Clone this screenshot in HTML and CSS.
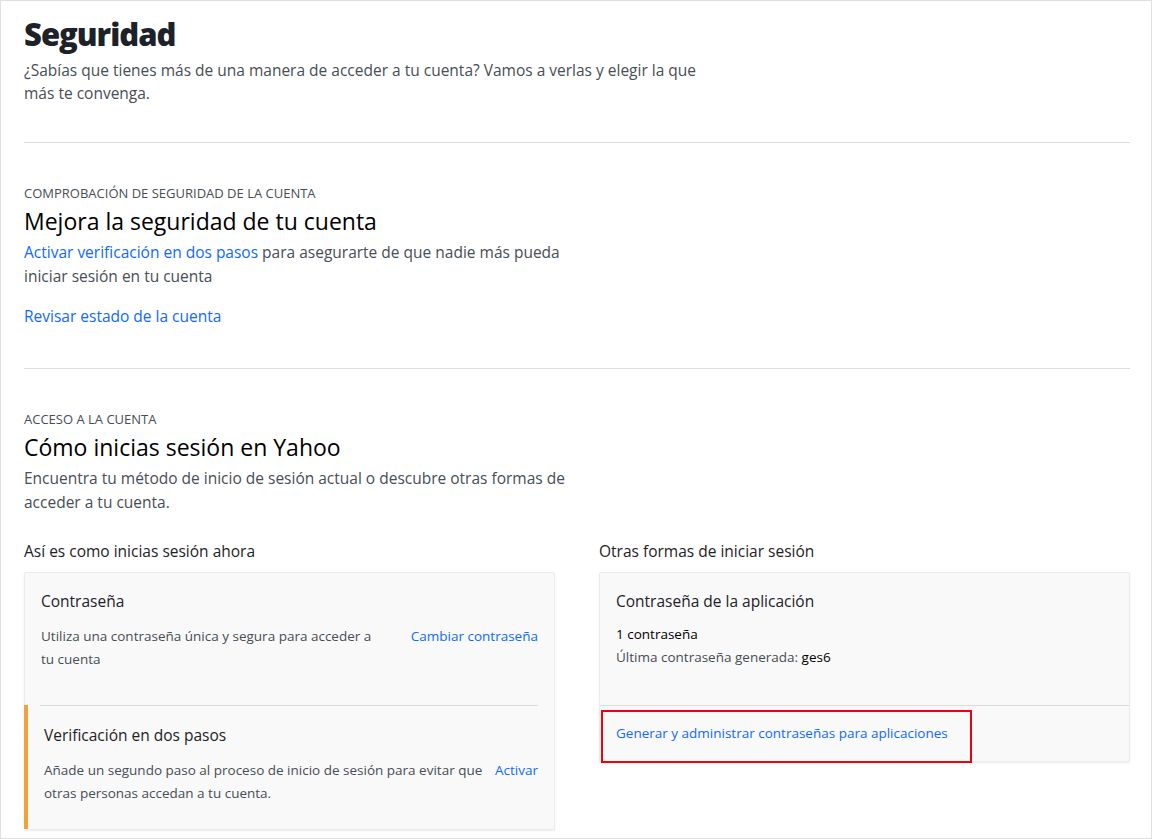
FILE: index.html
```html
<!DOCTYPE html>
<html lang="es">
<head>
  <meta charset="UTF-8">
  <title>Seguridad</title>
  <link rel="stylesheet" href="styles.css">
</head>
<body>
  <div class="page">
    <header class="intro">
      <h1>Seguridad</h1>
      <p>¿Sabías que tienes más de una manera de acceder a tu cuenta? Vamos a verlas y elegir la que más te convenga.</p>
    </header>

    <section class="block">
      <div class="eyebrow">COMPROBACIÓN DE SEGURIDAD DE LA CUENTA</div>
      <h2>Mejora la seguridad de tu cuenta</h2>
      <p class="lead"><a href="#">Activar verificación en dos pasos</a> para asegurarte de que nadie más pueda iniciar sesión en tu cuenta</p>
      <p class="lead review"><a href="#">Revisar estado de la cuenta</a></p>
    </section>

    <section class="block last">
      <div class="eyebrow">ACCESO A LA CUENTA</div>
      <h2>Cómo inicias sesión en Yahoo</h2>
      <p class="lead">Encuentra tu método de inicio de sesión actual o descubre otras formas de acceder a tu cuenta.</p>

      <div class="columns">
        <div class="col">
          <h3>Así es como inicias sesión ahora</h3>
          <div class="card">
            <div class="item">
              <h4>Contraseña</h4>
              <div class="row">
                <p>Utiliza una contraseña única y segura para acceder a tu cuenta</p>
                <a href="#">Cambiar contraseña</a>
              </div>
            </div>
            <div class="item warn">
              <h4>Verificación en dos pasos</h4>
              <div class="row">
                <p>Añade un segundo paso al proceso de inicio de sesión para evitar que otras personas accedan a tu cuenta.</p>
                <a href="#">Activar</a>
              </div>
            </div>
          </div>
        </div>

        <div class="col">
          <h3>Otras formas de iniciar sesión</h3>
          <div class="card">
            <div class="item app">
              <h4>Contraseña de la aplicación</h4>
              <div class="count">1 contraseña</div>
              <div class="meta">Última contraseña generada: <span>ges6</span></div>
            </div>
            <div class="card-foot">
              <a href="#" class="marked">Generar y administrar contraseñas para aplicaciones</a>
            </div>
          </div>
        </div>
      </div>
    </section>
  </div>
</body>
</html>
```

FILE: styles.css
```css
* { margin: 0; padding: 0; box-sizing: border-box; }
html, body {
  height: 100%;
  background: #fff;
  font-family: 'Open Sans', 'Liberation Sans', sans-serif;
  color: #464e56;
}
body { overflow: hidden; }
a { color: #0f69ff; text-decoration: none; }

.page {
  height: 839px;
  border: 1px solid #e0e0e0;
  padding: 0 21px 0 23px;
  overflow: hidden;
}

.intro {
  padding: 13px 0 37px;
  border-bottom: 1px solid #dedede;
}
.intro h1 {
  font-size: 31px;
  font-weight: 800;
  color: #1d2228;
  letter-spacing: -1px;
  line-height: 40px;
}
.intro p {
  font-size: 15.5px;
  line-height: 23px;
  margin-top: 5px;
  max-width: 690px;
}

.block {
  padding: 40px 0 40px;
  border-bottom: 1px solid #dedede;
}
.block.last { border-bottom: none; padding-bottom: 0; }

.eyebrow {
  font-size: 13px;
  line-height: 20px;
  color: #464e56;
}
h2 {
  font-size: 23px;
  font-weight: 400;
  color: #000;
  line-height: 36px;
  margin-bottom: 1px;
}
.lead {
  font-size: 15.5px;
  line-height: 24px;
  max-width: 550px;
}
.lead.review { margin-top: 16px; }

.columns {
  display: grid;
  grid-template-columns: 1fr 1fr;
  gap: 44px;
  margin-top: 26px;
}
.col h3 {
  font-size: 15.5px;
  font-weight: 400;
  color: #1d2228;
  line-height: 22px;
  margin-bottom: 10px;
}

.card {
  background: #f9f9f9;
  border: 1px solid #ececec;
  border-radius: 2px;
  box-shadow: 0 1px 2px rgba(0,0,0,0.08);
}
.item {
  padding: 17px 16px 34px;
}
.item h4 {
  font-size: 15.5px;
  font-weight: 400;
  color: #1d2228;
  line-height: 22px;
}
.row {
  display: flex;
  justify-content: space-between;
  gap: 20px;
  margin-top: 13px;
  font-size: 13.5px;
  line-height: 23px;
}
.row p { max-width: 340px; }
.row a { white-space: nowrap; }

.item.warn {
  position: relative;
  margin-left: -1px;
  border-left: 4px solid #f0a33a;
  padding: 19px 16px 24px 16px;
}
.item.warn::before {
  content: "";
  position: absolute;
  top: 0;
  left: 12px;
  right: 16px;
  border-top: 1px solid #dcdcdc;
}
.item.warn .row { gap: 6px; }
.item.warn .row p { max-width: none; flex: 1; }

.item.app { padding-bottom: 36px; border-bottom: 1px solid #dcdcdc; }
.count {
  margin-top: 11px;
  font-size: 13.5px;
  line-height: 23px;
  color: #000;
}
.meta {
  font-size: 13.5px;
  line-height: 23px;
}
.meta span { color: #000; }

.card-foot {
  padding: 4px 0 0 1px;
  height: 55px;
}
.marked {
  display: inline-block;
  border: 2px solid #f0000d;
  padding: 10px 22px 17px 13px;
  font-size: 13.5px;
  line-height: 22px;
}
```
